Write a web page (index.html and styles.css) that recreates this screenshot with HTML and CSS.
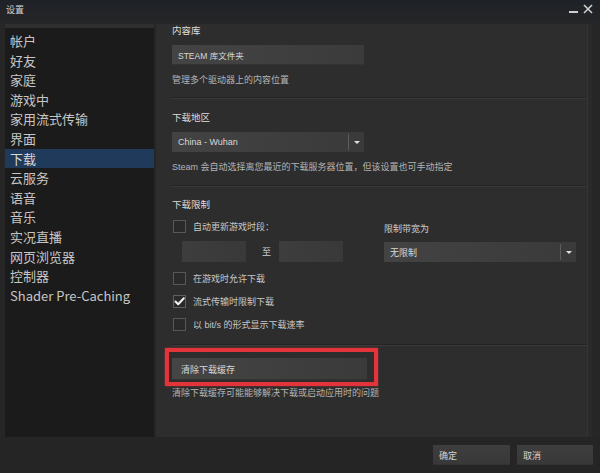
FILE: index.html
```html
<!DOCTYPE html>
<html lang="zh-CN">
<head>
<meta charset="utf-8">
<title>设置</title>
<link rel="stylesheet" href="styles.css">
</head>
<body>
<div class="window">
  <header class="titlebar">
    <span class="title">设置</span>
    <div class="controls">
      <span class="min-btn"></span>
      <svg class="close-btn" width="10" height="10" viewBox="0 0 10 10"><path d="M1 1 L9 9 M9 1 L1 9" stroke="#d0d0d0" stroke-width="1.6" fill="none"/></svg>
    </div>
  </header>
  <div class="main">
    <nav class="sidebar">
      <div class="nav-item">帐户</div>
      <div class="nav-item">好友</div>
      <div class="nav-item">家庭</div>
      <div class="nav-item">游戏中</div>
      <div class="nav-item">家用流式传输</div>
      <div class="nav-item">界面</div>
      <div class="nav-item active">下载</div>
      <div class="nav-item">云服务</div>
      <div class="nav-item">语音</div>
      <div class="nav-item">音乐</div>
      <div class="nav-item">实况直播</div>
      <div class="nav-item">网页浏览器</div>
      <div class="nav-item">控制器</div>
      <div class="nav-item">Shader Pre-Caching</div>
    </nav>
    <section class="panel">
      <div class="label first">内容库</div>
      <div class="btn field lib-btn">STEAM 库文件夹</div>
      <div class="desc">管理多个驱动器上的内容位置</div>
      <div class="divider d1"></div>

      <div class="label">下载地区</div>
      <div class="select field region">
        <span class="select-text">China - Wuhan</span>
        <span class="select-arrow"><span class="tri"></span></span>
      </div>
      <div class="desc">Steam 会自动选择离您最近的下载服务器位置，但该设置也可手动指定</div>
      <div class="divider d2"></div>

      <div class="label">下载限制</div>
      <div class="limit-row">
        <div class="limit-left">
          <div class="check-row top">
            <span class="checkbox"></span>
            <span class="check-label">自动更新游戏时段：</span>
          </div>
          <div class="time-row">
            <span class="input"></span>
            <span class="to">至</span>
            <span class="input"></span>
          </div>
        </div>
        <div class="limit-right">
          <div class="bw-label">限制带宽为</div>
          <div class="select field bw">
            <span class="select-text">无限制</span>
            <span class="select-arrow"><span class="tri"></span></span>
          </div>
        </div>
      </div>
      <div class="check-row c1">
        <span class="checkbox"></span>
        <span class="check-label">在游戏时允许下载</span>
      </div>
      <div class="check-row c2">
        <span class="checkbox checked"><svg width="13" height="13" viewBox="0 0 13 13"><path d="M2.5 6.5 L5.2 9.3 L10.8 3.2" stroke="#f2f2f2" stroke-width="2" fill="none" stroke-linecap="round" stroke-linejoin="round"/></svg></span>
        <span class="check-label">流式传输时限制下载</span>
      </div>
      <div class="check-row c2">
        <span class="checkbox"></span>
        <span class="check-label">以 bit/s 的形式显示下载速率</span>
      </div>
      <div class="divider d3"></div>

      <div class="clear-wrap">
        <div class="btn field clear-btn">清除下载缓存</div>
        <div class="highlight"></div>
      </div>
      <div class="desc tight">清除下载缓存可能能够解决下载或启动应用时的问题</div>
    </section>
  </div>
  <footer class="footer">
    <div class="btn foot-btn ok">确定</div>
    <div class="btn foot-btn cancel">取消</div>
  </footer>
</div>
</body>
</html>
```

FILE: styles.css
```css
* { box-sizing: border-box; }

html, body {
  margin: 0;
  padding: 0;
  background: #262626;
}

body {
  font-family: "Liberation Sans", "Noto Sans CJK SC", sans-serif;
  color: #d0d0d0;
}

.window {
  width: 600px;
  height: 473px;
  display: flex;
  flex-direction: column;
  background: linear-gradient(to bottom, #1e2127 0px, #252628 22px, #262626 40px, #262626 100%);
}

/* Title bar */
.titlebar {
  height: 24px;
  display: flex;
  align-items: flex-start;
  justify-content: space-between;
  padding: 0 7px 0 6px;
}

.title {
  font-size: 9px;
  line-height: 20px;
  color: #d6d6d6;
  font-family: "Noto Sans CJK SC", sans-serif;
}

.controls {
  display: flex;
  align-items: flex-start;
  gap: 5px;
  padding-top: 4px;
}

.min-btn {
  width: 9px;
  height: 2px;
  background: #cfcfcf;
  margin-top: 7px;
}

.close-btn { display: block; }

/* Main area */
.main {
  height: 413px;
  display: flex;
  gap: 2px;
  padding: 0 8px 0 5px;
}

.sidebar {
  width: 149px;
  flex: none;
  background: #1b1b1b;
  border-top: 4px solid #2f2f2f;
  padding-top: 3px;
}

.nav-item {
  height: 19.6px;
  line-height: 19.6px;
  padding-left: 5px;
  font-family: "Noto Sans CJK SC", sans-serif;
  font-size: 13px;
  color: #c6c6c6;
  white-space: nowrap;
}

.nav-item.active {
  background: #1f3a5b;
  color: #d8d8d8;
}

.panel {
  flex: 1;
  background: #2d2d2d;
  padding: 1px 6px 0 16px;
  box-shadow: inset -4px 0 0 #2a2a2a, inset -5px 0 0 #353535;
}

.label {
  font-size: 9.5px;
  line-height: 12px;
  height: 12px;
  color: #dcdcdc;
  margin-top: 12px;
}
.label.first { margin-top: 0; }

.desc {
  font-size: 9px;
  line-height: 12px;
  height: 12px;
  color: #b4b4b4;
  margin-top: 9px;
  white-space: nowrap;
}
.desc.tight { margin-top: 7px; }

.divider {
  height: 2px;
  border-top: 1px solid #232323;
  border-bottom: 1px solid #3b3b3b;
}
.d1 { margin-top: 11px; margin-bottom: 13px; }
.d1 + .label { margin-top: 0; }
.d2 { margin-top: 12px; }
.d3 { margin-top: 13px; }

.field {
  width: 192px;
  height: 20px;
  display: flex;
  align-items: center;
  font-size: 9px;
  color: #d8d8d8;
}

.btn {
  background: linear-gradient(to right, #444444, #3b3b3b);
  box-shadow: inset 0 -1px 0 #333;
}

.lib-btn {
  margin-top: 8px;
  padding-left: 6px;
  font-size: 8.5px;
}

.select {
  background: linear-gradient(to right, #434343, #3a3a3a);
  justify-content: space-between;
  margin-top: 8px;
}

.select-text { padding-left: 6px; }

.select-arrow {
  width: 16px;
  height: 16px;
  border-left: 1px solid #5c5c5c;
  display: flex;
  align-items: center;
  justify-content: center;
}

.tri {
  width: 0;
  height: 0;
  border-left: 3px solid transparent;
  border-right: 3px solid transparent;
  border-top: 3px solid #e0e0e0;
}

/* Limit section */
.limit-row {
  display: flex;
  margin-top: 9px;
}

.limit-left { width: 212px; flex: none; }

.check-row {
  display: flex;
  align-items: center;
  height: 13px;
  padding-left: 1px;
  gap: 7px;
}
.c1 { margin-top: 10px; }
.c2 { margin-top: 10px; }

.checkbox {
  width: 13px;
  height: 13px;
  border: 1px solid #575757;
  background: #2a2a2a;
  flex: none;
  display: flex;
  align-items: center;
  justify-content: center;
}
.checkbox.checked { border-color: #5f5f5f; }
.checkbox svg { display: block; margin: -1px; }

.check-label {
  font-size: 9px;
  line-height: 12px;
  color: #c8c8c8;
  white-space: nowrap;
}

.time-row {
  display: flex;
  align-items: center;
  margin-top: 8px;
  padding-left: 10px;
  height: 21px;
}

.input {
  width: 64px;
  height: 21px;
  background: linear-gradient(to right, #3d3d3d, #393939);
}

.to {
  font-size: 9px;
  color: #cfcfcf;
  margin: 0 8px 0 16px;
}

.limit-right { flex: none; }

.bw-label {
  font-size: 9px;
  line-height: 12px;
  color: #cdcdcd;
  margin-top: 3px;
}

.bw { margin-top: 7px; }

/* Clear cache */
.clear-wrap {
  position: relative;
  margin-top: 12px;
  width: 195px;
}

.clear-btn {
  width: 195px;
  height: 22px;
  padding-left: 9px;
  background: linear-gradient(to right, #454545, #3a3a3a);
}

.highlight {
  position: absolute;
  left: -7px;
  top: -10px;
  width: 213px;
  height: 38px;
  border: 4px solid #e3343b;
  box-shadow: 0 0 2px rgba(227, 52, 59, 0.6);
  pointer-events: none;
}

/* Footer */
.footer {
  height: 36px;
  display: flex;
  justify-content: flex-end;
  align-items: flex-start;
  gap: 7px;
  padding: 8px 7px 0 0;
  background: #252525;
}

.foot-btn {
  height: 20px;
  display: flex;
  align-items: center;
  padding-left: 6px;
  font-size: 9px;
  color: #d4d4d4;
  background: linear-gradient(to bottom, #3e3e3e, #383838);
}
.ok { width: 77px; }
.cancel { width: 76px; }
```
